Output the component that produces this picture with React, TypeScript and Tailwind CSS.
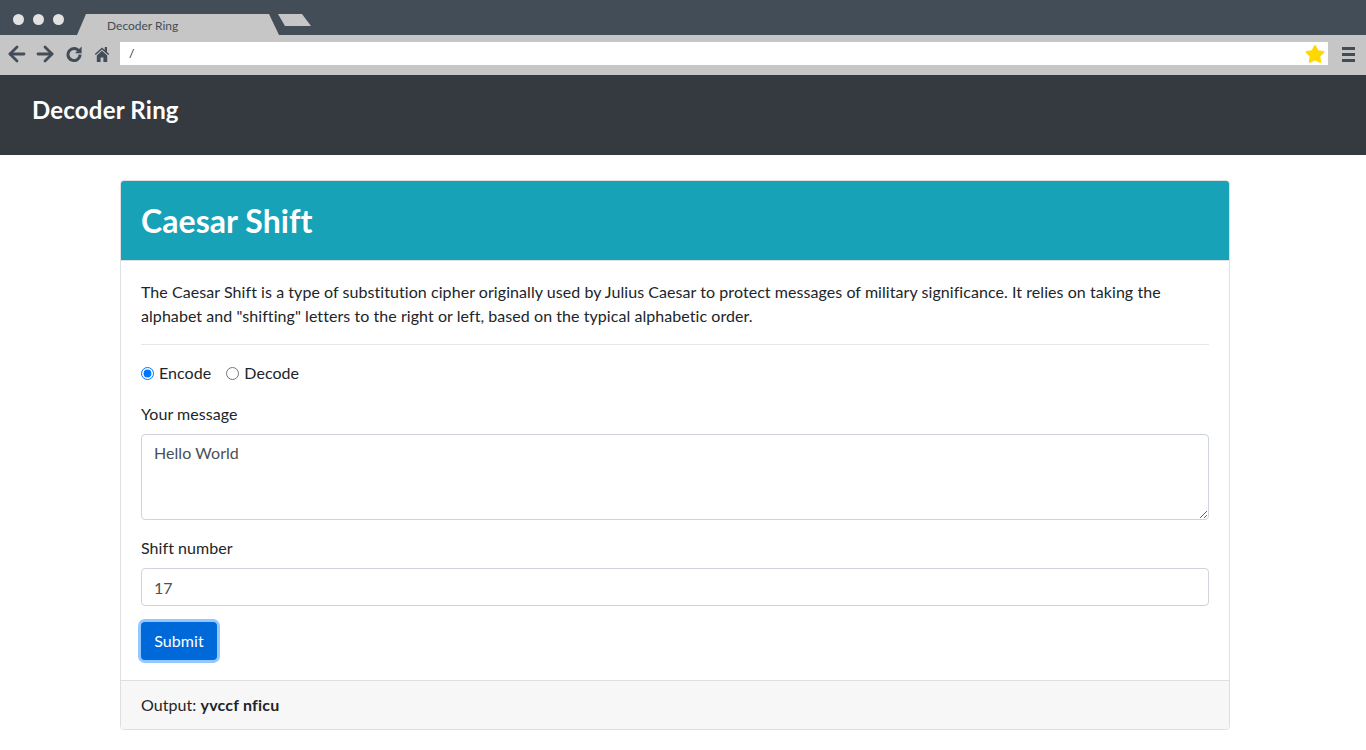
import { ArrowLeft, ArrowRight } from "lucide-react";
import { FaStar } from "react-icons/fa";

// ─── Browser frame ────────────────────────────────────────────────────────────

function ReloadIcon() {
  return (
    <svg viewBox="0 0 16 16" className="w-[16px] h-[16px] ml-[9px] -mt-[2px]" fill="none">
      <path d="M13 5.2A6 6 0 1 0 14 8.6" stroke="currentColor" strokeWidth="3" />
      <path d="M15.6 0.6V7.2H9Z" fill="currentColor" />
    </svg>
  );
}

function HomeIcon() {
  return (
    <svg viewBox="0 0 16 16" className="w-[16px] h-[16px] ml-[12px] -mt-[2px]" fill="currentColor">
      <path d="M8 1.5 0.8 8l1 1L8 3.6 14.2 9l1-1-2.2-2V1h-2.2v3Z" />
      <path d="M8 4.8 2.8 9.4V16h3.8v-4.6h2.8V16h3.8V9.4Z" />
    </svg>
  );
}

function BrowserChrome() {
  return (
    <div className="shrink-0">
      {/* Tab strip */}
      <div className="h-[35px] bg-[#434d58] flex items-end">
        <div className="flex gap-[9px] pl-[13px] w-[77px] pb-[10px]">
          <span className="w-[11px] h-[11px] rounded-full bg-[#e2e2e2]" />
          <span className="w-[11px] h-[11px] rounded-full bg-[#e2e2e2]" />
          <span className="w-[11px] h-[11px] rounded-full bg-[#e2e2e2]" />
        </div>
        <div className="w-[202px] h-[21px] bg-[#c6c6c6] [clip-path:polygon(0_100%,9px_0,192px_0,100%_100%)] pl-[30px] text-[12px] leading-[23px] text-[#434d58] tracking-normal">
          Decoder Ring
        </div>
        <div className="w-[33px] h-[12px] mb-[9px] -ml-[1px] bg-[#c6c6c6] [clip-path:polygon(0_0,24px_0,100%_100%,7px_100%)]" />
      </div>

      {/* Toolbar */}
      <div className="h-[40px] bg-[#c6c6c6] flex items-center text-[#434d58]">
        <div className="w-[120px] flex items-center pl-[5px]">
          <ArrowLeft className="w-[24px] h-[24px] -mt-[2px]" strokeWidth={2.8} />
          <ArrowRight className="w-[24px] h-[24px] ml-[4px] -mt-[2px]" strokeWidth={2.8} />
          <ReloadIcon />
          <HomeIcon />
        </div>
        <div className="flex-1 h-[23px] -mt-[3px] bg-white flex items-center justify-between pl-[9px] pr-[3px] text-[12px] text-[#212529]">
          <span>/</span>
          <FaStar className="w-[20px] h-[20px] text-[#ffd800]" />
        </div>
        <div className="w-[38px] flex justify-end pr-[11px]">
          <div className="w-[13px] flex flex-col gap-[3px] -mt-[2px]">
            <span className="h-[3px] bg-[#434d58]" />
            <span className="h-[3px] bg-[#434d58]" />
            <span className="h-[3px] bg-[#434d58]" />
          </div>
        </div>
      </div>
    </div>
  );
}

// ─── Caesar shift card ────────────────────────────────────────────────────────

function CaesarCard() {
  return (
    <div className="w-[1110px] ml-[120px] mt-[25px] border border-[#dfdfdf] rounded-[4px] overflow-hidden">
      <div className="h-[79px] bg-[#17a2b8] text-white px-[20px] flex items-center">
        <h2 className="text-[32px] font-bold leading-[1.2] mt-[2px]">Caesar Shift</h2>
      </div>

      <div className="px-[20px] pt-[19px] pb-[20px] border-t border-[#dfdfdf]">
        <p className="mb-[16px]">
          The Caesar Shift is a type of substitution cipher originally used by Julius Caesar to protect messages of
          military significance. It relies on taking the alphabet and "shifting" letters to the right or left, based on
          the typical alphabetic order.
        </p>
        <hr className="border-[#e6e6e6] mb-[16px]" />

        <div className="flex items-center h-[24px] mb-[17px]">
          <label className="flex items-center mr-[15px]">
            <input type="radio" name="mode" defaultChecked className="w-[13px] h-[13px] mr-[5px] accent-[#0075ff]" />
            Encode
          </label>
          <label className="flex items-center">
            <input type="radio" name="mode" className="w-[13px] h-[13px] mr-[5px]" />
            Decode
          </label>
        </div>

        <label className="block mb-[8px]">Your message</label>
        <textarea
          defaultValue="Hello World"
          className="block w-full h-[86px] border border-[#ced4da] rounded-[4px] px-[12px] py-[6px] text-[#495057] mb-[16px] outline-none"
        />

        <label className="block mb-[8px]">Shift number</label>
        <input
          type="text"
          defaultValue="17"
          className="block w-full h-[38px] border border-[#ced4da] rounded-[4px] px-[12px] text-[#495057] mb-[16px] outline-none"
        />

        <button className="block h-[38px] w-[76px] rounded-[4px] bg-[#0069d9] text-white shadow-[0_0_0_3px_rgba(38,143,255,0.5)]">
          Submit
        </button>
      </div>

      <div className="h-[49px] bg-[#f7f7f7] border-t border-[#dfdfdf] px-[20px] flex items-center">
        <span>
          Output: <strong className="font-bold tracking-[0.2px]">yvccf nficu</strong>
        </span>
      </div>
    </div>
  );
}

// ─── Page ─────────────────────────────────────────────────────────────────────

export default function App() {
  return (
    <div className="min-h-[750px] bg-white text-[#212529] text-[16px] leading-[24px] tracking-[0.06px] [font-variant-ligatures:none] font-['Lato','Noto_Sans',sans-serif]">
      <BrowserChrome />
      <header className="h-[80px] bg-[#343a40] flex items-start pt-[21px] pl-[32px]">
        <h1 className="text-[24px] font-bold text-white leading-[1.2] tracking-[0.2px]">Decoder Ring</h1>
      </header>
      <CaesarCard />
    </div>
  );
}
